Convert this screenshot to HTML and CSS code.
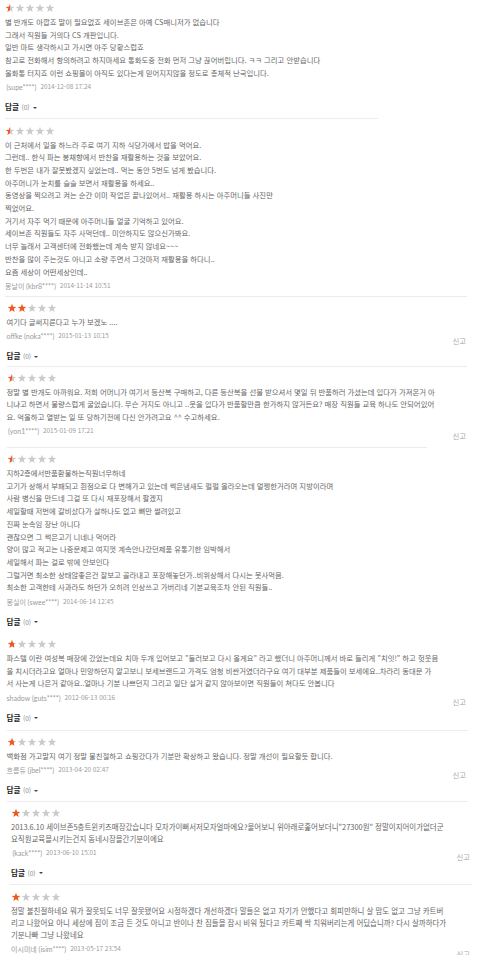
FILE: index.html
```html
<!DOCTYPE html>
<html lang="ko">
<head>
<meta charset="utf-8">
<title>상품평</title>
<link rel="stylesheet" href="styles.css">
</head>
<body>
<svg class="defs" width="0" height="0" aria-hidden="true">
  <defs>
    <linearGradient id="g-half" x1="0" y1="0" x2="1" y2="0">
      <stop offset="0.5" stop-color="#f0561d"/>
      <stop offset="0.5" stop-color="#cbcbcb"/>
    </linearGradient>
    <linearGradient id="g-most" x1="0" y1="0" x2="1" y2="0">
      <stop offset="0.7" stop-color="#f0561d"/>
      <stop offset="0.7" stop-color="#cbcbcb"/>
    </linearGradient>
    <symbol id="star" viewBox="0 0 10 10">
      <path d="M5 0.7 L6.087 3.803 L9.375 3.879 L6.759 5.872 L7.704 9.021 L5 7.15 L2.296 9.021 L3.241 5.872 L0.625 3.879 L3.913 3.803 Z"/>
    </symbol>
  </defs>
</svg>

<div class="list">

  <div class="rv rv--a rv1">
    <svg class="stars" width="50" height="10" viewBox="0 0 50 10"><use href="#star" x="0" width="10" height="10" fill="url(#g-half)"/><use href="#star" x="10" width="10" height="10" class="off"/><use href="#star" x="20" width="10" height="10" class="off"/><use href="#star" x="30" width="10" height="10" class="off"/><use href="#star" x="40" width="10" height="10" class="off"/></svg>
    <p class="body">별 반개도 아깝죠 말이 필요없죠 세이브존은 아예 CS매니저가 없습니다<br>그래서 직원들 거의다 CS 개판입니다.<br>일반 마트 생각하시고 가시면 아주 당황스럽죠<br>참고로 전화해서 항의하려고 하지마세요 통화도중 전화 먼저 그냥 끊어버립니다. ㅋㅋ 그리고 안받습니다<br>울화통 터지죠 이런 쇼핑몰이 아직도 있다는게 믿어지지않을 정도로 총체적 난국입니다.</p>
    <div class="meta"><span class="name name--empty">(supe****)</span><span class="date">2014-12-08 17:24</span></div>
    <div class="reply"><b>답글</b><span class="cnt">(0)</span><span class="caret"></span></div>
  </div>
  <div class="sep sep1"></div>

  <div class="rv rv--a rv2">
    <svg class="stars" width="50" height="10" viewBox="0 0 50 10"><use href="#star" x="0" width="10" height="10" fill="url(#g-half)"/><use href="#star" x="10" width="10" height="10" class="off"/><use href="#star" x="20" width="10" height="10" class="off"/><use href="#star" x="30" width="10" height="10" class="off"/><use href="#star" x="40" width="10" height="10" class="off"/></svg>
    <p class="body">이 근처에서 일을 하느라 주로 여기 지하 식당가에서 밥을 먹어요.<br>그런데.. 한식 파는 봉채향에서 반찬을 재활용하는 것을 보았어요.<br>한 두번은 내가 잘못봤겠지 싶었는데.. 먹는 동안 5번도 넘게 봤습니다.<br>아주머니가 눈치를 슬슬 보면서 재활용을 하세요..<br>동영상을 찍으려고 켜는 순간 이미 작업은 끝나있어서.. 재활용 하시는 아주머니들 사진만<br>찍었어요.<br>거기서 자주 먹기 때문에 아주머니들 얼굴 기억하고 있어요.<br>세이브존 직원들도 자주 사먹던데.. 미안하지도 않으신가봐요.<br>너무 놀래서 고객센터에 전화했는데 계속 받지 않네요~~~<br>반찬을 많이 주는것도 아니고 소량 주면서 그것마저 재활용을 하다니..<br>요즘 세상이 어떤세상인데..</p>
    <div class="meta"><span class="name">몽날이 (kbr8****)</span><span class="date">2014-11-14 10:51</span></div>
  </div>
  <div class="sep sep2"></div>

  <div class="rv rv--b rv3">
    <svg class="stars" width="50" height="10" viewBox="0 0 50 10"><use href="#star" x="0" width="10" height="10" class="on"/><use href="#star" x="10" width="10" height="10" class="on"/><use href="#star" x="20" width="10" height="10" class="off"/><use href="#star" x="30" width="10" height="10" class="off"/><use href="#star" x="40" width="10" height="10" class="off"/></svg>
    <p class="body">여기다 글써지른다고 누가 보겠노 ....</p>
    <div class="meta"><span class="name">offke (noka****)</span><span class="date">2015-01-13 10:15</span><span class="report">신고</span></div>
    <div class="reply"><b>답글</b><span class="cnt">(0)</span><span class="caret"></span></div>
  </div>
  <div class="sep sep3"></div>

  <div class="rv rv--b rv4">
    <svg class="stars" width="50" height="10" viewBox="0 0 50 10"><use href="#star" x="0" width="10" height="10" fill="url(#g-half)"/><use href="#star" x="10" width="10" height="10" class="off"/><use href="#star" x="20" width="10" height="10" class="off"/><use href="#star" x="30" width="10" height="10" class="off"/><use href="#star" x="40" width="10" height="10" class="off"/></svg>
    <p class="body">정말 별 반개도 아까워요. 저희 어머니가 여기서 등산복 구매하고, 다른 등산복을 선물 받으셔서 몇일 뒤 반품하러 가셨는데 입다가 가져온거 아<br>니냐고 하면서 불량스럽게 굴었습니다. 무슨 거지도 아니고 ..옷을 입다가 반품할만큼 한가하지 않거든요? 매장 직원들 교육 하나도 안되어있어<br>요. 억울하고 열받는 일 또 당하기전에 다신 안가려고요 ^^ 수고하세요.</p>
    <div class="meta"><span class="name name--empty">(yon1****)</span><span class="date">2015-01-09 17:21</span><span class="report">신고</span></div>
  </div>
  <div class="sep sep4"></div>

  <div class="rv rv--b rv5">
    <svg class="stars" width="50" height="10" viewBox="0 0 50 10"><use href="#star" x="0" width="10" height="10" fill="url(#g-half)"/><use href="#star" x="10" width="10" height="10" class="off"/><use href="#star" x="20" width="10" height="10" class="off"/><use href="#star" x="30" width="10" height="10" class="off"/><use href="#star" x="40" width="10" height="10" class="off"/></svg>
    <p class="body">지하2층에서반품환불하는직원너무하네<br>고기가 상해서 부패되고 흰점으로 다 변해가고 있는데 썩은냄새도 펄펄 올라오는데 멀쩡한거라며 지방이라며<br>사람 병신을 만드네 그걸 또 다시 재포장해서 팔겠지<br>세일할때 저번에 갈비샀다가 살하나도 없고 뼈만 썰려있고<br>진짜 눈속임 장난 아니다<br>괜찮으면 그 썩은고기 니네나 먹어라<br>양이 많고 적고는 나중문제고 여지껏 계속안나갔던제품 유통기한 임박해서<br>세일해서 파는 걸로 밖에 안보인다<br>그럴거면 최소한 상태않좋은건 잘보고 골라내고 포장해놓던가..비위상해서 다시는 못사먹음.<br>최소한 고객한테 사과라도 하던가 오히려 인상쓰고 가버리네 기본교육조차 안된 직원들..</p>
    <div class="meta"><span class="name">몽실이 (swee****)</span><span class="date">2014-06-14 12:45</span></div>
    <div class="reply"><b>답글</b><span class="cnt">(0)</span><span class="caret"></span></div>
  </div>

  <div class="rv rv--b rv6">
    <svg class="stars" width="50" height="10" viewBox="0 0 50 10"><use href="#star" x="0" width="10" height="10" fill="url(#g-most)"/><use href="#star" x="10" width="10" height="10" class="off"/><use href="#star" x="20" width="10" height="10" class="off"/><use href="#star" x="30" width="10" height="10" class="off"/><use href="#star" x="40" width="10" height="10" class="off"/></svg>
    <p class="body">파스텔 이란 여성복 매장에 갔었는데요 치마 두개 입어보고 "둘러보고 다시 올게요" 라고 했더니 아주머니께서 바로 들리게 "치잇!" 하고 헛웃음<br>을 치시더라고요 얼마나 민망하던지 알고보니 보세브랜드고 가격도 엄청 비싼거였더라구요 여기 대부분 제품들이 보세에요..차라리 동대문 가<br>서 사는게 나은거 같아요..얼마나 기분 나쁘던지 그리고 일단 살거 같지 않아보이면 직원들이 쳐다도 안봅니다</p>
    <div class="meta"><span class="name">shadow (guts****)</span><span class="date">2012-06-13 00:16</span><span class="report">신고</span></div>
    <div class="reply"><b>답글</b><span class="cnt">(0)</span><span class="caret"></span></div>
  </div>
  <div class="sep sep6"></div>

  <div class="rv rv--b rv7">
    <svg class="stars" width="50" height="10" viewBox="0 0 50 10"><use href="#star" x="0" width="10" height="10" fill="url(#g-most)"/><use href="#star" x="10" width="10" height="10" class="off"/><use href="#star" x="20" width="10" height="10" class="off"/><use href="#star" x="30" width="10" height="10" class="off"/><use href="#star" x="40" width="10" height="10" class="off"/></svg>
    <p class="body">백화점 가고말지 여기 정말 불친절하고 쇼핑갔다가 기분만 확상하고 왔습니다. 정말 개선이 필요할듯 합니다.</p>
    <div class="meta"><span class="name">흐름듀 (jbel****)</span><span class="date">2013-04-20 02:47</span><span class="report">신고</span></div>
    <div class="reply"><b>답글</b><span class="cnt">(0)</span><span class="caret"></span></div>
  </div>
  <div class="sep sep7"></div>

  <div class="rv rv--c rv8">
    <svg class="stars" width="50" height="10" viewBox="0 0 50 10"><use href="#star" x="0" width="10" height="10" class="on"/><use href="#star" x="10" width="10" height="10" class="off"/><use href="#star" x="20" width="10" height="10" class="off"/><use href="#star" x="30" width="10" height="10" class="off"/><use href="#star" x="40" width="10" height="10" class="off"/></svg>
    <p class="body body--lg">2013.6.10 세이브존5층트윈키즈매장갔습니다 모자가이뻐서저모자얼마에요?물어보니 위아래로훑어보더니"27300원" 정말이지어이가없더군<br>요직원교육을시키는건지 동네시장을간기분이에요</p>
    <div class="meta"><span class="name name--empty">(kack****)</span><span class="date">2013-06-10 15:01</span><span class="report">신고</span></div>
    <div class="reply"><b>답글</b><span class="cnt">(0)</span><span class="caret"></span></div>
  </div>
  <div class="sep sep8"></div>

  <div class="rv rv--c rv9">
    <svg class="stars" width="50" height="10" viewBox="0 0 50 10"><use href="#star" x="0" width="10" height="10" class="on"/><use href="#star" x="10" width="10" height="10" class="off"/><use href="#star" x="20" width="10" height="10" class="off"/><use href="#star" x="30" width="10" height="10" class="off"/><use href="#star" x="40" width="10" height="10" class="off"/></svg>
    <p class="body body--lg">정말 불친절하네요 뭐가 잘못되도 너무 잘못됐어요 시정하겠다 개선하겠다 말들은 없고 자기가 안했다고 회피만하니 살 맘도 없고 그냥 카트버<br>리고 나왔어요 아니 세상에 짐이 조금 든 것도 아니고 반이나 찬 짐들을 잠시 비워 뒀다고 카트째 싹 치워버리는게 어딨습니까? 다시 살까하다가<br>기분나빠 그냥 나왔네요</p>
    <div class="meta"><span class="name">이시미네 (isim****)</span><span class="date">2013-05-17 23:54</span><span class="report">신고</span></div>
  </div>

</div>
</body>
</html>
```

FILE: styles.css
```css
html, body {
  margin: 0;
  padding: 0;
  background: #ffffff;
}

body {
  font-family: "Noto Sans CJK KR", "Noto Sans", sans-serif;
  color: #666666;
  overflow: hidden;
}

.defs {
  display: block;
  width: 0;
  height: 0;
  overflow: hidden;
}

.list {
  display: flex;
  flex-direction: column;
}

/* review blocks */
.rv {
  display: flex;
  flex-direction: column;
  align-items: stretch;
}
.rv--a { margin-left: 5px;   width: 461px; }
.rv--b { margin-left: 6.5px; width: 459.5px; }
.rv--c { margin-left: 11px;  width: 459px; }

.rv1 { padding-top: 3px;    padding-bottom: 5px; }
.rv2 { padding-top: 6.5px;  padding-bottom: 4.3px; }
.rv3 { padding-top: 6px;    padding-bottom: 3.8px; }
.rv4 { padding-top: 5.7px;  padding-bottom: 9.4px; }
.rv5 { padding-top: 6.3px;  padding-bottom: 0; }
.rv6 { padding-top: 11.5px; padding-bottom: 6.4px; }
.rv7 { padding-top: 6px;    padding-bottom: 4.5px; }
.rv8 { padding-top: 6px;    padding-bottom: 5.5px; }
.rv9 { padding-top: 6.5px;  padding-bottom: 0; }

/* stars */
.stars {
  display: block;
  width: 50px;
  height: 10px;
}
.stars .off { fill: #cbcbcb; }
.stars .on  { fill: #f0561d; }

/* review text */
.body {
  margin: 3px 0 0 0;
  font-size: 7.35px;
  line-height: 12.7px;
  color: #666666;
  white-space: nowrap;
}
.body--lg {
  font-size: 7.45px;
  line-height: 12.3px;
}

/* author / date row */
.meta {
  margin-top: 1.5px;
  height: 12px;
  line-height: 12px;
  display: flex;
  align-items: flex-start;
  white-space: nowrap;
}
.name {
  font-family: "Lato", "Noto Sans CJK KR", sans-serif;
  font-size: 7px;
  color: #9a9a9a;
}
.name--empty { margin-left: 1.5px; }
.date {
  font-family: "Noto Sans CJK KR", sans-serif;
  font-size: 6.4px;
  color: #9a9a9a;
  margin-left: 4px;
}
.report {
  margin-left: auto;
  margin-top: 4.5px;
  margin-bottom: -4.5px;
  font-size: 7.4px;
  color: #a8a8a8;
}

/* reply toggle */
.reply {
  margin-top: 8px;
  height: 12px;
  line-height: 12px;
  display: flex;
  align-items: center;
  white-space: nowrap;
}
.reply b {
  font-size: 7.6px;
  font-weight: 700;
  color: #222222;
}
.cnt {
  font-size: 6.6px;
  color: #888888;
  margin-left: 2.5px;
}
.caret {
  width: 0;
  height: 0;
  margin-left: 3px;
  margin-top: 1px;
  border-left: 2px solid transparent;
  border-right: 2px solid transparent;
  border-top: 2.5px solid #444444;
}

/* separators */
.sep {
  height: 1px;
  background: #ececec;
}
.sep1 { margin-left: 5px;   width: 373px; }
.sep2 { margin-left: 5px;   width: 462px; }
.sep3 { margin-left: 6.5px; width: 460.5px; }
.sep4 { margin-left: 6.5px; width: 420px; }
.sep6 { margin-left: 7px;   width: 461px; }
.sep7 { margin-left: 7px;   width: 461px; }
.sep8 { margin-left: 10px;  width: 462px; }
```
